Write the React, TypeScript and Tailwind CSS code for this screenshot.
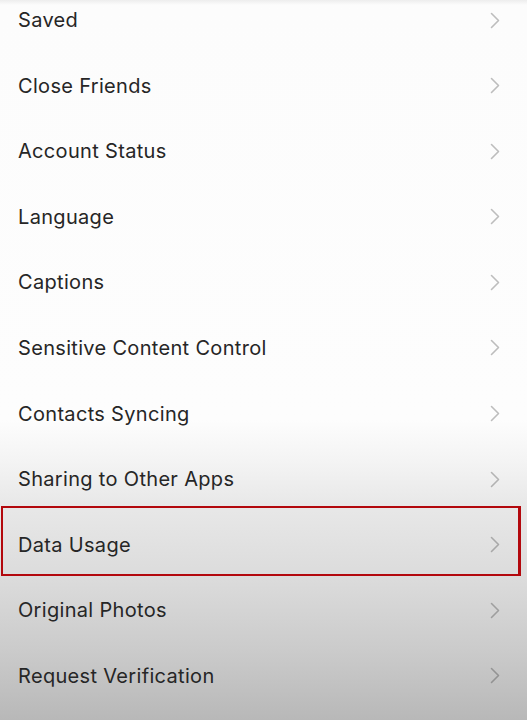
import React from 'react';

const items = [
  'Saved',
  'Close Friends',
  'Account Status',
  'Language',
  'Captions',
  'Sensitive Content Control',
  'Contacts Syncing',
  'Sharing to Other Apps',
  'Data Usage',
  'Original Photos',
  'Request Verification',
];

const Chevron = () => (
  <svg width="10" height="17" viewBox="0 0 10 17" fill="none" className="shrink-0">
    <path d="M1.5 1.5L8.5 8.5L1.5 15.5" stroke="rgba(0,0,0,0.25)" strokeWidth="1.6" strokeLinecap="round" strokeLinejoin="round" />
  </svg>
);

const Row = ({ label, highlighted }: { label: string; highlighted?: boolean }) => (
  <div className="relative flex h-[65.6px] items-center justify-between pl-[18px] pr-[27px]">
    <span className="text-[20px] tracking-[0.32px] text-[#262626]">{label}</span>
    <Chevron />
    {highlighted && (
      <div className="pointer-events-none absolute -top-[6px] bottom-[1.5px] left-[1px] right-[6px] border-2 border-r-[3px] border-[#b3080d]" />
    )}
  </div>
);

export default function App() {
  return (
    <div
      className="relative h-[720px] w-[527px] overflow-hidden bg-[linear-gradient(to_bottom,#ededed_0px,#fcfcfc_5px,#fdfdfd_420px,#f4f4f4_460px,#e8e8e8_505px,#dbdbdb_580px,#cbcbcb_650px,#b8b8b8_720px)]"
      style={{ fontFamily: 'Inter, "Open Sans", sans-serif' }}
    >
      <div className="-mt-[12.8px] flex flex-col">
        {items.map((label) => (
          <Row key={label} label={label} highlighted={label === 'Data Usage'} />
        ))}
      </div>
    </div>
  );
}
